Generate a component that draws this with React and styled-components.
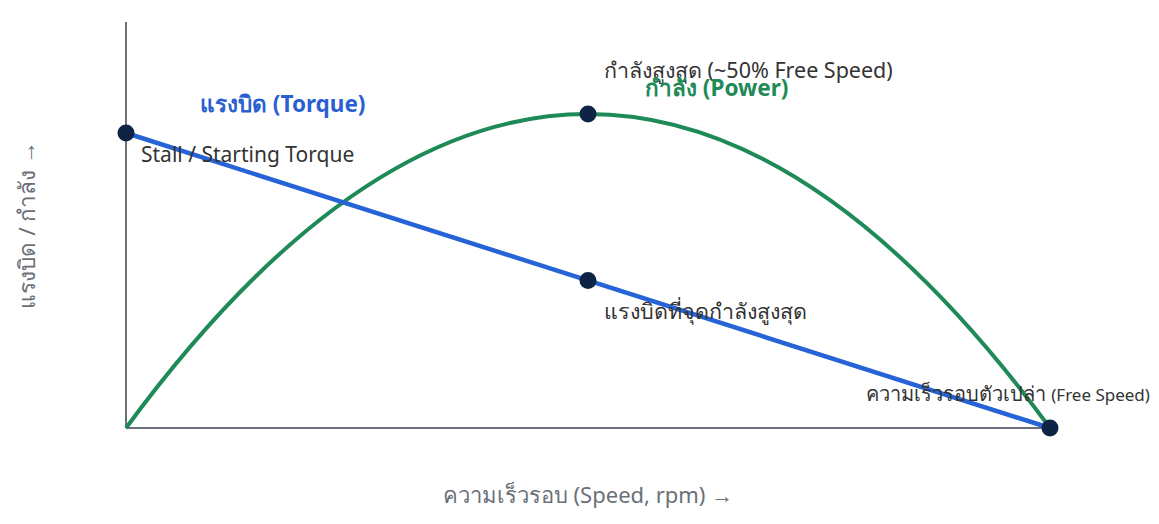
import React from 'react';
import styled, { createGlobalStyle } from 'styled-components';

const GlobalStyle = createGlobalStyle`
    html, body {
        margin: 0;
        padding: 0;
        background: #fff;
    }
    body {
        font-family: "Noto Sans", "Open Sans", sans-serif;
    }
`;

const Page = styled.div`
    width: 1159px;
    height: 524px;
    display: flex;
    background: #fff;
    overflow: hidden;
`;

const Chart = styled.svg`
    width: 100%;
    height: 100%;
    display: block;
`;

const Label = styled.text`
    font-family: "Noto Sans", "Open Sans", sans-serif;
    font-size: ${(p) => p.size || 21}px;
    font-weight: ${(p) => (p.bold ? 700 : 400)};
    fill: ${(p) => p.color || '#333'};
`;

const Dot = styled.circle`
    fill: #0f2444;
`;

// chart geometry (px)
const X0 = 126;
const X1 = 1050;
const Y_TOP = 22;
const Y_BASE = 428;
const STALL_Y = 133;
const PEAK_Y = 114;

export default function App() {
    const midX = (X0 + X1) / 2;
    const ctrlY = 2 * PEAK_Y - Y_BASE; // quadratic control so the apex hits PEAK_Y
    const torqueAtMid = STALL_Y + (Y_BASE - STALL_Y) / 2;

    return (
        <Page>
            <GlobalStyle />
            <Chart viewBox="0 0 1159 524">
                {/* axes */}
                <line x1={X0} y1={Y_TOP} x2={X0} y2={Y_BASE} stroke="#6b6f78" strokeWidth="2" />
                <line x1={X0} y1={Y_BASE} x2={X1} y2={Y_BASE} stroke="#6b6f78" strokeWidth="2" />

                {/* power curve */}
                <path
                    d={`M ${X0} ${Y_BASE} Q ${midX} ${ctrlY} ${X1} ${Y_BASE}`}
                    fill="none"
                    stroke="#1e8a57"
                    strokeWidth="4"
                />
                {/* torque line */}
                <line x1={X0} y1={STALL_Y} x2={X1} y2={Y_BASE} stroke="#2563d6" strokeWidth="4.5" />

                <Dot cx={X0} cy={STALL_Y} r="8.5" />
                <Dot cx={midX} cy={PEAK_Y} r="8.5" />
                <Dot cx={midX} cy={torqueAtMid} r="8.5" />
                <Dot cx={X1} cy={Y_BASE} r="8.5" />

                <Label x="200" y="112" size={22.5} bold color="#2a5fd0">แรงบิด (Torque)</Label>
                <Label x="141" y="162">Stall / Starting Torque</Label>

                <Label x="604" y="78" size={21.5}>กำลังสูงสุด (~50% Free Speed)</Label>
                <Label x="645" y="96" size={22.5} bold color="#1e8a57">กำลัง (Power)</Label>

                <Label x="604" y="319" size={21.5}>แรงบิดที่จุดกำลังสูงสุด</Label>

                <Label x="866" y="401" size={20}>
                    ความเร็วรอบตัวเปล่า <tspan fontSize="17">(Free Speed)</tspan>
                </Label>

                <Label x={midX} y="503" size={22} textAnchor="middle" color="#6b6f78">
                    ความเร็วรอบ (Speed, rpm) →
                </Label>
                <Label
                    x="0"
                    y="0"
                    size={22.5}
                    textAnchor="middle"
                    color="#6b6f78"
                    transform="translate(35 225) rotate(-90)"
                >
                    แรงบิด / กำลัง →
                </Label>
            </Chart>
        </Page>
    );
}
